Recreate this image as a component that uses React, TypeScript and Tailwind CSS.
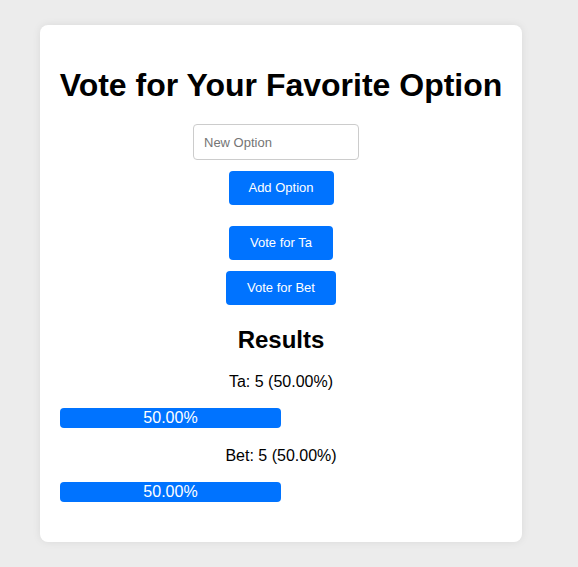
import { useState } from 'react'

type Option = { name: string; votes: number }

export default function App() {
  const [options, setOptions] = useState<Option[]>([
    { name: 'Ta', votes: 5 },
    { name: 'Bet', votes: 5 },
  ])
  const [draft, setDraft] = useState('')

  const total = options.reduce((sum, o) => sum + o.votes, 0)

  const addOption = () => {
    if (!draft.trim()) return
    setOptions([...options, { name: draft.trim(), votes: 0 }])
    setDraft('')
  }

  const vote = (i: number) => {
    setOptions(options.map((o, j) => (j === i ? { ...o, votes: o.votes + 1 } : o)))
  }

  return (
    <div className="min-h-[567px] bg-[#ececec] pt-[25px] pb-[25px] font-['Liberation_Sans',Arial,sans-serif] text-black">
      <div className="ml-[40px] w-[482px] rounded-lg bg-white p-5 shadow-[0_0_8px_rgba(0,0,0,0.08)]">
        <h1 className="mt-[22px] -mx-2 whitespace-nowrap text-center text-[32px] leading-[37px] font-bold">
          Vote for Your Favorite Option
        </h1>

        <div className="mt-[20px] flex flex-col items-center">
          <input
            value={draft}
            onChange={(e) => setDraft(e.target.value)}
            placeholder="New Option"
            className="mr-[10px] h-[36px] w-[166px] rounded border border-[#ccc] px-[10px] text-[13px] placeholder:text-[#757575] outline-none"
          />
          <button
            onClick={addOption}
            className="mt-[11px] h-[34px] w-[105px] rounded bg-[#0073ff] text-[13px] text-white"
          >
            Add Option
          </button>
        </div>

        <div className="mt-[21px] flex flex-col items-center gap-[11px]">
          {options.map((o, i) => (
            <button
              key={o.name}
              onClick={() => vote(i)}
              className="h-[34px] rounded bg-[#0073ff] px-[21px] text-[13px] text-white"
            >
              Vote for {o.name}
            </button>
          ))}
        </div>

        <h2 className="mt-[21px] text-center text-[24px] leading-[28px] font-bold">Results</h2>

        <div className="mt-[19px]">
          {options.map((o, i) => {
            const pct = total ? (o.votes / total) * 100 : 0
            return (
              <div key={o.name} className={i > 0 ? 'mt-[19px]' : ''}>
                <p className="text-center text-[16px] leading-[18px]">
                  {o.name}: {o.votes} ({pct.toFixed(2)}%)
                </p>
                <div className="mt-[17px] h-[20px] w-full">
                  <div
                    className="h-[20px] rounded bg-[#0073ff] text-center text-[16px] leading-[20px] text-white"
                    style={{ width: `${pct}%` }}
                  >
                    {pct.toFixed(2)}%
                  </div>
                </div>
              </div>
            )
          })}
        </div>
        <div className="h-[20px]" />
      </div>
    </div>
  )
}
